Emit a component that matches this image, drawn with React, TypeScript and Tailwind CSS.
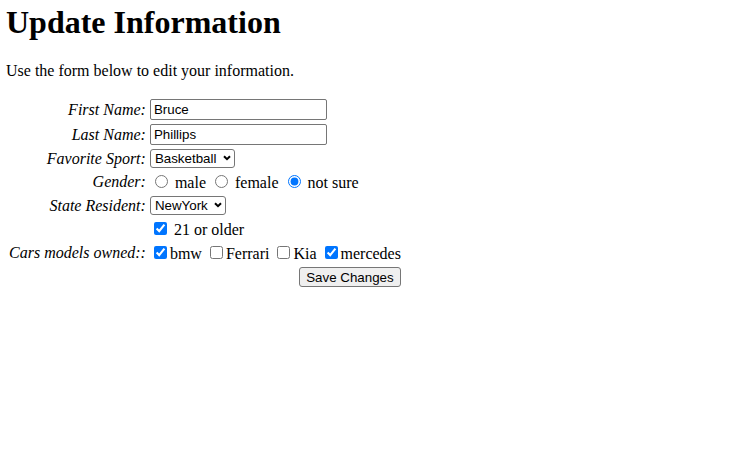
import { useState } from 'react';

// chevron used inside the custom selects
function Chevron() {
  return (
    <svg
      className="pointer-events-none absolute right-[4px] top-[6px]"
      width="8"
      height="6"
      viewBox="0 0 8 6"
      fill="none"
    >
      <path d="M1 1.2L4 4.2L7 1.2" stroke="#000" strokeWidth="2" />
    </svg>
  );
}

const field =
  "font-['Liberation_Sans',Arial,sans-serif] text-[13.33px] text-black";

function App() {
  const [first, setFirst] = useState('Bruce');
  const [last, setLast] = useState('Phillips');
  const [sport, setSport] = useState('Basketball');
  const [gender, setGender] = useState('notsure');
  const [state, setState] = useState('NewYork');
  const [adult, setAdult] = useState(true);
  const [cars, setCars] = useState<Record<string, boolean>>({
    bmw: true,
    ferrari: false,
    kia: false,
    mercedes: true,
  });

  const toggleCar = (k: string) => setCars((c) => ({ ...c, [k]: !c[k] }));

  const box = 'm-[3px_3px_3px_4px] w-[13px] h-[13px] align-baseline';
  const radio = 'm-[3px_3px_0_5px] w-[13px] h-[13px] align-baseline';

  return (
    <div className="min-h-screen bg-white px-[6px] text-black font-['Liberation_Serif','Times_New_Roman',serif] text-[16px] leading-[normal]">
      <h1 className="text-[32px] font-bold mt-[4px] mb-[21.44px]">Update Information</h1>
      <p className="mb-4">Use the form below to edit your information.</p>

      <form onSubmit={(e) => e.preventDefault()}>
        <table className="border-separate border-spacing-[2px]">
          <tbody>
            <tr>
              <td className="p-px text-right italic">First Name:</td>
              <td className="p-px">
                <input
                  value={first}
                  onChange={(e) => setFirst(e.target.value)}
                  className={`${field} w-[177px] h-[21px] px-[3px] border border-[#767676] rounded-[2px] bg-white`}
                />
              </td>
            </tr>
            <tr>
              <td className="p-px text-right italic">Last Name:</td>
              <td className="p-px">
                <input
                  value={last}
                  onChange={(e) => setLast(e.target.value)}
                  className={`${field} w-[177px] h-[21px] px-[3px] border border-[#767676] rounded-[2px] bg-white`}
                />
              </td>
            </tr>
            <tr>
              <td className="p-px text-right italic">Favorite Sport:</td>
              <td className="p-px">
                <span className="relative inline-block">
                  <select
                    value={sport}
                    onChange={(e) => setSport(e.target.value)}
                    className={`${field} appearance-none w-[85px] h-[19px] pl-[4px] border border-[#767676] rounded-[3px] bg-white`}
                  >
                    <option>Basketball</option>
                    <option>Football</option>
                    <option>Baseball</option>
                  </select>
                  <Chevron />
                </span>
              </td>
            </tr>
            <tr>
              <td className="p-px text-right italic">Gender:</td>
              <td className="p-px">
                <input type="radio" name="g" className={radio} checked={gender === 'male'} onChange={() => setGender('male')} /> male{' '}
                <input type="radio" name="g" className={radio} checked={gender === 'female'} onChange={() => setGender('female')} /> female{' '}
                <input type="radio" name="g" className={radio} checked={gender === 'notsure'} onChange={() => setGender('notsure')} /> not sure
              </td>
            </tr>
            <tr>
              <td className="p-px text-right italic">State Resident:</td>
              <td className="p-px">
                <span className="relative inline-block">
                  <select
                    value={state}
                    onChange={(e) => setState(e.target.value)}
                    className={`${field} appearance-none w-[76px] h-[19px] pl-[4px] border border-[#767676] rounded-[3px] bg-white`}
                  >
                    <option>NewYork</option>
                    <option>Texas</option>
                    <option>Ohio</option>
                  </select>
                  <Chevron />
                </span>
              </td>
            </tr>
            <tr>
              <td className="p-px"></td>
              <td className="p-px">
                <input type="checkbox" className={box} checked={adult} onChange={() => setAdult(!adult)} /> 21 or older
              </td>
            </tr>
            <tr>
              <td className="p-px text-right italic">Cars models owned::</td>
              <td className="p-px">
                <input type="checkbox" className={box} checked={cars.bmw} onChange={() => toggleCar('bmw')} />bmw{' '}
                <input type="checkbox" className={box} checked={cars.ferrari} onChange={() => toggleCar('ferrari')} />Ferrari{' '}
                <input type="checkbox" className={box} checked={cars.kia} onChange={() => toggleCar('kia')} />Kia{' '}
                <input type="checkbox" className={box} checked={cars.mercedes} onChange={() => toggleCar('mercedes')} />mercedes
              </td>
            </tr>
            <tr>
              <td className="p-px"></td>
              <td className="p-px text-right">
                <button
                  type="submit"
                  className={`${field} w-[102px] h-[20px] bg-[#efefef] border border-[#767676] rounded-[3px]`}
                >
                  Save Changes
                </button>
              </td>
            </tr>
          </tbody>
        </table>
      </form>
    </div>
  );
}

export default App;
